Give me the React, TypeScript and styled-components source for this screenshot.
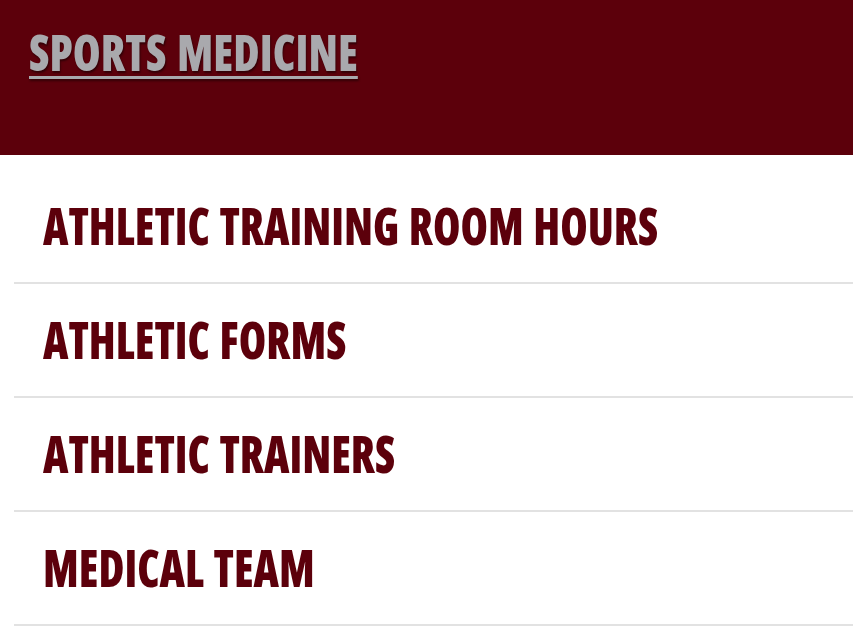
import React from 'react'
import styled, { createGlobalStyle } from 'styled-components'

const GlobalStyle = createGlobalStyle`
  html, body {
    margin: 0;
    padding: 0;
    background: #fff;
  }
  * {
    box-sizing: border-box;
  }
`

const links = [
  'ATHLETIC TRAINING ROOM HOURS',
  'ATHLETIC FORMS',
  'ATHLETIC TRAINERS',
  'MEDICAL TEAM',
]

export default function App() {
  return (
    <>
      <GlobalStyle />
      <Page>
        <Header>
          <Title href="#">SPORTS MEDICINE</Title>
        </Header>
        <NavList>
          {links.map((label) => (
            <NavItem key={label}>
              <NavLink href="#">{label}</NavLink>
            </NavItem>
          ))}
        </NavList>
      </Page>
    </>
  )
}

const Page = styled.div`
  width: 853px;
  min-height: 628px;
  overflow: hidden;
  background: #fff;
  font-family: 'Open Sans', 'Liberation Sans', sans-serif;
`
const Header = styled.header`
  height: 155px;
  padding: 28px 0 0 29px;
  background: #5c000b;
`
const Title = styled.a`
  display: inline-block;
  font-size: 49px;
  font-weight: 800;
  font-stretch: 75%;
  line-height: 1;
  color: #a9a9ad;
  text-decoration: underline;
  text-decoration-thickness: 3px;
  text-underline-offset: 5px;
  text-shadow: 1px 2px 2px rgba(0, 0, 0, 0.45);
  word-spacing: 3px;
  white-space: nowrap;
  transform: scaleX(0.918);
  transform-origin: left center;
`
const NavList = styled.ul`
  list-style: none;
  margin: 0;
  padding: 15px 0 0 14px;
`
const NavItem = styled.li`
  padding: 29px 0 31px 29px;
  border-bottom: 2px solid #e2e2e2;
`
const NavLink = styled.a`
  display: inline-block;
  font-size: 52px;
  font-weight: 800;
  font-stretch: 75%;
  line-height: 1;
  color: #5c000b;
  text-decoration: none;
  word-spacing: 2px;
  white-space: nowrap;
  transform: scaleX(0.852);
  transform-origin: left center;
`
